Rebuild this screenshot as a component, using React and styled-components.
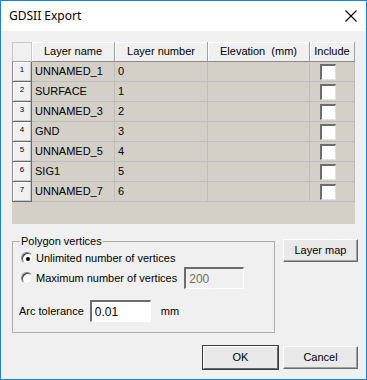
import React from 'react';
import styled, { createGlobalStyle } from 'styled-components';

const GlobalStyle = createGlobalStyle`
  html, body {
    margin: 0;
    padding: 0;
    background: #ffffff;
  }
  * {
    box-sizing: border-box;
  }
`;

const Window = styled.div`
  width: 367px;
  height: 380px;
  border: 1px solid #1883d7;
  background: #f0f0f0;
  display: flex;
  flex-direction: column;
  font-family: 'Liberation Sans', Arial, sans-serif;
  font-size: 11px;
  color: #000;
`;

const TitleBar = styled.div`
  height: 30px;
  background: #ffffff;
  display: flex;
  align-items: center;
  justify-content: space-between;
  padding: 0 9px 0 8px;
`;

const Title = styled.span`
  font-family: 'Noto Sans', 'Open Sans', sans-serif;
  font-size: 12px;
  padding-bottom: 1px;
`;

const Body = styled.div`
  flex: 1;
  padding: 11px 10px 0 11px;
  display: flex;
  flex-direction: column;
`;

const Grid = styled.div`
  width: 343px;
  height: 182px;
  background: #d4d0c8;
  display: flex;
  flex-direction: column;
`;

const Row = styled.div`
  display: flex;
  height: 20px;
`;

const Corner = styled.div`
  width: 20px;
  height: 20px;
  background: #f0f0f0;
  border: 1px solid #c8c8c8;
  border-bottom-color: #a0a0a0;
`;

const HeadCell = styled.div`
  width: ${p => p.$w}px;
  height: 20px;
  background: #f0f0f0;
  border-right: 1px solid #a0a0a0;
  border-bottom: 1px solid #8a8a8a;
  box-shadow: inset 1px 1px 0 #ffffff;
  display: flex;
  align-items: center;
  justify-content: center;
  white-space: pre;
  padding-bottom: 1px;
`;

const RowHead = styled.div`
  width: 20px;
  height: 20px;
  background: #f0f0f0;
  border-left: 1px solid #8a8a8a;
  border-right: 1px solid #696969;
  border-bottom: 1px solid #696969;
  box-shadow: inset 1px 1px 0 #ffffff, inset -1px -1px 0 #c8c8c8;
  font-size: 8px;
  display: flex;
  justify-content: center;
  padding-top: 3px;
`;

const Cell = styled.div`
  width: ${p => p.$w}px;
  height: 20px;
  border-right: 1px solid #bdbdbd;
  border-bottom: 1px solid #bdbdbd;
  display: flex;
  align-items: center;
  padding-left: ${p => (p.$check ? 0 : 3)}px;
  padding-bottom: 1px;
`;

const Check = styled.span`
  width: 16px;
  height: 16px;
  margin-left: 10px;
  margin-top: 1px;
  background: #ffffff;
  border-top: 2px solid #6d6d6d;
  border-left: 2px solid #6d6d6d;
  border-right: 1px solid #e4e4e4;
  border-bottom: 1px solid #e4e4e4;
`;

const Lower = styled.div`
  display: flex;
  align-items: flex-start;
  margin-top: 11px;
  margin-right: -2px;
`;

const Group = styled.fieldset`
  margin: 0;
  width: 263px;
  padding: 1px 6px 10px 6px;
  border: 1px solid #adadad;
  display: flex;
  flex-direction: column;
`;

const Legend = styled.legend`
  padding: 0 1px;
  margin-left: 1px;
  font-size: 11px;
  line-height: 13px;
`;

const RadioRow = styled.label`
  display: flex;
  align-items: center;
  height: ${p => (p.$tall ? 22 : 18)}px;
  padding-left: 2px;
  gap: 3px;
`;

const Radio = styled.span`
  width: 12px;
  height: 12px;
  border-radius: 50%;
  background: #ffffff;
  border: 1px solid;
  border-color: #808080 #e8e8e8 #e8e8e8 #808080;
  box-shadow: inset 1px 1px 0 #404040;
  display: flex;
  align-items: center;
  justify-content: center;
  &::after {
    content: '';
    width: 4px;
    height: 4px;
    border-radius: 50%;
    background: ${p => (p.$on ? '#000' : 'transparent')};
    margin: 1px 0 0 1px;
  }
`;

const Field = styled.div`
  width: ${p => p.$w}px;
  height: 22px;
  margin-left: ${p => p.$gap}px;
  background: ${p => (p.$disabled ? '#f0f0f0' : '#ffffff')};
  color: ${p => (p.$disabled ? '#6d6d6d' : '#000')};
  border-top: 2px solid #6d6d6d;
  border-left: 2px solid #6d6d6d;
  border-right: 1px solid #ffffff;
  border-bottom: 1px solid #ffffff;
  display: flex;
  align-items: center;
  padding-left: 3px;
  font-size: 12px;
`;

const ArcRow = styled.div`
  display: flex;
  align-items: center;
  margin-top: 11px;
`;

const Unit = styled.span`
  margin-left: 10px;
`;

const Button = styled.button`
  width: 75px;
  height: 23px;
  margin: 0;
  padding: 0 0 1px;
  background: #e9e9e9;
  border: 1px solid;
  border-color: #ffffff #696969 #696969 #ffffff;
  box-shadow: ${p => (p.$default ? '0 0 0 1px #3c3c3c' : 'inset -1px -1px 0 #a0a0a0')};
  font-family: 'Liberation Sans', Arial, sans-serif;
  font-size: 11px;
  color: #000;
`;

const Side = styled.div`
  margin: 4px 0 0 8px;
`;

const Footer = styled.div`
  display: flex;
  justify-content: flex-end;
  gap: 5px;
  margin: 13px -2px 0 0;
`;

const cols = [83, 93, 102, 45];
const rows = [
  ['UNNAMED_1', '0'],
  ['SURFACE', '1'],
  ['UNNAMED_3', '2'],
  ['GND', '3'],
  ['UNNAMED_5', '4'],
  ['SIG1', '5'],
  ['UNNAMED_7', '6'],
];

function CloseIcon() {
  return (
    <svg width="12" height="12" viewBox="0 0 12 12">
      <path d="M0.5 0.5 L11.5 11.5 M11.5 0.5 L0.5 11.5" stroke="#000" strokeWidth="1.1" />
    </svg>
  );
}

export default function App() {
  return (
    <>
      <GlobalStyle />
      <Window>
        <TitleBar>
          <Title>GDSII Export</Title>
          <CloseIcon />
        </TitleBar>
        <Body>
          <Grid>
            <Row>
              <Corner />
              <HeadCell $w={cols[0]}>Layer name</HeadCell>
              <HeadCell $w={cols[1]}>Layer number</HeadCell>
              <HeadCell $w={cols[2]}>{'Elevation  (mm)'}</HeadCell>
              <HeadCell $w={cols[3]}>Include</HeadCell>
            </Row>
            {rows.map((r, i) => (
              <Row key={i}>
                <RowHead>{i + 1}</RowHead>
                <Cell $w={cols[0]}>{r[0]}</Cell>
                <Cell $w={cols[1]}>{r[1]}</Cell>
                <Cell $w={cols[2]} />
                <Cell $w={cols[3]} $check>
                  <Check />
                </Cell>
              </Row>
            ))}
          </Grid>
          <Lower>
            <Group>
              <Legend>Polygon vertices</Legend>
              <RadioRow>
                <Radio $on />
                Unlimited number of vertices
              </RadioRow>
              <RadioRow $tall>
                <Radio />
                Maximum number of vertices
                <Field $w={60} $gap={4} $disabled>200</Field>
              </RadioRow>
              <ArcRow>
                Arc tolerance
                <Field $w={61} $gap={6}>0.01</Field>
                <Unit>mm</Unit>
              </ArcRow>
            </Group>
            <Side>
              <Button>Layer map</Button>
            </Side>
          </Lower>
          <Footer>
            <Button $default>OK</Button>
            <Button>Cancel</Button>
          </Footer>
        </Body>
      </Window>
    </>
  );
}
